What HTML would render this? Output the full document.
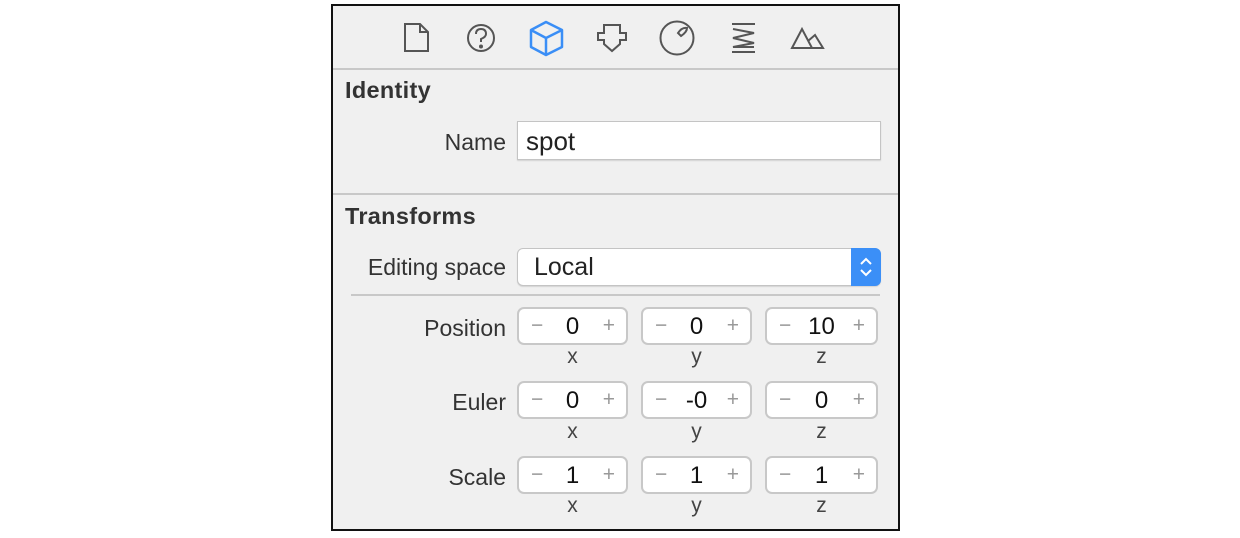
<!DOCTYPE html>
<html><head><meta charset="utf-8"><style>
body{margin:0;width:1240px;height:538px;background:#fff;position:relative;overflow:hidden;font-family:"Liberation Sans",sans-serif;}
.panel{position:absolute;left:331px;top:4px;width:565px;height:523px;border:2px solid #111;background:#f0f0f0;}
.a{position:absolute;}
.hr{position:absolute;height:2px;background:#c8c8c8;}
.lbl{position:absolute;font-size:23px;color:#333;text-align:right;}
.h{position:absolute;font-size:23.5px;font-weight:bold;color:#333;letter-spacing:0.3px}
.box{position:absolute;background:#fff;border:1px solid #c4c4c4;border-radius:6px;box-shadow:0 1px 1px rgba(0,0,0,.12);}
.st{position:absolute;height:38px;background:#fff;border:2px solid #c8c8c8;border-radius:7px;box-sizing:border-box;}
.st .m,.st .p{position:absolute;top:5px;font-size:21px;color:#999;}
.st .m{left:12px}.st .p{right:11px}
.st .v{position:absolute;left:0;right:0;top:4px;text-align:center;font-size:24px;color:#111;}
.ax{position:absolute;font-size:21px;color:#444;width:111px;text-align:center;}
</style></head><body>
<div class="panel"></div>
<svg class="a" style="left:0;top:0" width="1240" height="70" fill="none" stroke="#555" stroke-width="2">
<path d="M405 24 H420 L428 32 V51 H405 Z M420 24 V32 H428"/>
<circle cx="481" cy="38" r="13"/>
<path d="M476 34 Q476 29 481 29 Q486 29 486 34 Q486 37 481 39 V42" stroke-width="2"/>
<circle cx="481" cy="46.5" r="1" fill="#555"/>
<g stroke="#3a8ef6" stroke-width="2.5" stroke-linejoin="round"><path d="M546 22 L562 30 V47 L546 55 L531 47 V30 Z M531 30 L546 38 L562 30 M546 38 V55"/></g>
<path d="M604 25 H620 V33 H626 V40 H620 V44 L612 51 L604 44 V40 H598 V33 H604 Z"/>
<circle cx="677" cy="38" r="16.5"/>
<path d="M678 33 Q682 27 687 28 Q687 32 681 36 Z"/>
<path d="M732 24 H755 M732 52 H755 M733 29 L754 33 L733 38 L754 43 L733 47 L754 47" stroke-width="2"/>
<path d="M792 48 L802 29 L812 48 Z M808 41 L815 35 L823 48 H812"/>
</svg>
<div class="hr" style="left:333px;top:68px;width:565px"></div>
<div class="h" style="left:345px;top:77px">Identity</div>
<div class="lbl" style="left:360px;width:146px;top:129px">Name</div>
<div class="box" style="left:517px;top:121px;width:362px;height:37px;border-radius:0;"><span class="a" style="left:8px;top:4px;font-size:26px;color:#222">spot</span></div>
<div class="hr" style="left:333px;top:193px;width:565px"></div>
<div class="h" style="left:345px;top:203px">Transforms</div>
<div class="lbl" style="left:320px;width:186px;top:254px">Editing space</div>
<div class="box" style="left:517px;top:248px;width:362px;height:36px;"><span class="a" style="left:16px;top:4px;font-size:25px;color:#222">Local</span>
<div class="a" style="right:-1px;top:-1px;width:30px;height:38px;background:#3b8ff7;border-radius:0 6px 6px 0;"><svg width="30" height="38" fill="none" stroke="#fff" stroke-width="2"><path d="M10 16 L15 11 L20 16 M10 22 L15 27 L20 22"/></svg></div></div>
<div class="hr" style="left:351px;top:294px;width:529px;height:1.5px"></div>

<div class="lbl" style="left:360px;width:146px;top:315px">Position</div>
<div class="st" style="left:517px;top:307px;width:111px"><span class="m">−</span><span class="v">0</span><span class="p">+</span></div>
<div class="st" style="left:641px;top:307px;width:111px"><span class="m">−</span><span class="v">0</span><span class="p">+</span></div>
<div class="st" style="left:765px;top:307px;width:113px"><span class="m">−</span><span class="v">10</span><span class="p">+</span></div>
<div class="ax" style="left:517px;top:345px">x</div><div class="ax" style="left:641px;top:345px">y</div><div class="ax" style="left:766px;top:345px">z</div>

<div class="lbl" style="left:360px;width:146px;top:389px">Euler</div>
<div class="st" style="left:517px;top:381px;width:111px"><span class="m">−</span><span class="v">0</span><span class="p">+</span></div>
<div class="st" style="left:641px;top:381px;width:111px"><span class="m">−</span><span class="v">-0</span><span class="p">+</span></div>
<div class="st" style="left:765px;top:381px;width:113px"><span class="m">−</span><span class="v">0</span><span class="p">+</span></div>
<div class="ax" style="left:517px;top:420px">x</div><div class="ax" style="left:641px;top:420px">y</div><div class="ax" style="left:766px;top:420px">z</div>

<div class="lbl" style="left:360px;width:146px;top:464px">Scale</div>
<div class="st" style="left:517px;top:456px;width:111px"><span class="m">−</span><span class="v">1</span><span class="p">+</span></div>
<div class="st" style="left:641px;top:456px;width:111px"><span class="m">−</span><span class="v">1</span><span class="p">+</span></div>
<div class="st" style="left:765px;top:456px;width:113px"><span class="m">−</span><span class="v">1</span><span class="p">+</span></div>
<div class="ax" style="left:517px;top:494px">x</div><div class="ax" style="left:641px;top:494px">y</div><div class="ax" style="left:766px;top:494px">z</div>
</body></html>
